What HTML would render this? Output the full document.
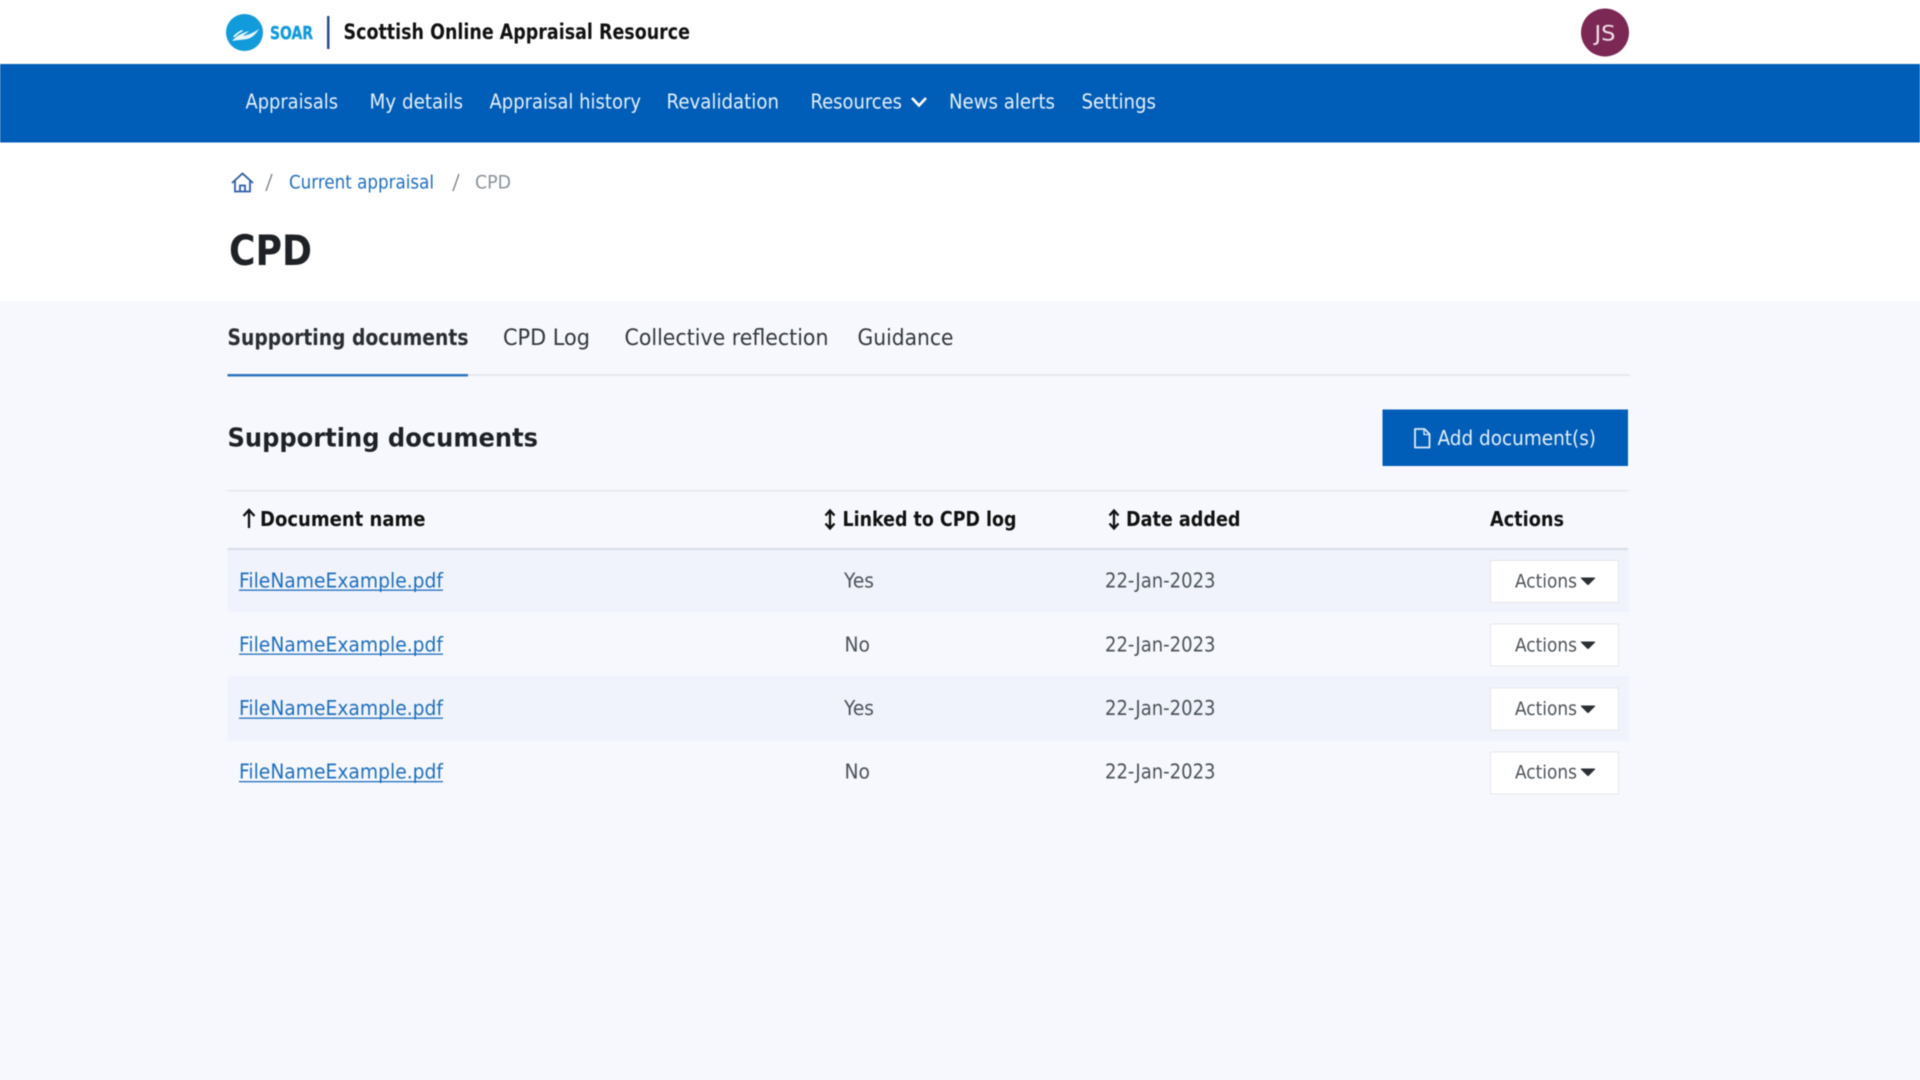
<!DOCTYPE html>
<html lang="en"><head><meta charset="utf-8"><title>CPD</title>
<style>
html,body{margin:0;padding:0;background:#f6f8fd;overflow:hidden}
svg{display:block;filter:blur(.55px)}
text{font-family:"DejaVu Sans","Liberation Sans",sans-serif;font-size:20px;fill:#212529}
.n{fill:#e6eff9;font-size:20px}
.b{font-weight:700}
.th{font-weight:700;font-size:20px;fill:#111}
.l{fill:#1f6fbf}
.g{fill:#4b5259}
.t{font-size:22px;fill:#33383d}
</style></head><body>
<svg width="1920" height="1080" viewBox="0 0 1920 1080" xmlns="http://www.w3.org/2000/svg">
<rect width="1920" height="1080" fill="#f6f8fd"/>
<rect width="1920" height="301" fill="#fff"/>
<rect y="64" width="1920" height="78.500" fill="#005eb8"/>

<circle cx="244.500" cy="32.500" r="18.500" fill="#129bdb"/>
<path d="M232 41c4-5 10-8 17-10-2 2-4 3-6 5 5-1 10-3 16-7-3 5-7 9-12 10-5 1-10 1-15 2z" fill="#e8f5fc"/>
<path d="M233 37c2-3 5-5 9-7l1 1c-4 2-6 4-8 6z" fill="#fff"/>
<text x="270" y="39" class="b" style="font-size:18px;fill:#129bdb;stroke:#129bdb;stroke-width:.4" textLength="43" lengthAdjust="spacingAndGlyphs">SOAR</text>
<rect x="327" y="16" width="2.500" height="33" fill="#2c4a8f"/>
<text x="343.500" y="39" style="font-size:21px;font-weight:700;fill:#111" textLength="346.500" lengthAdjust="spacingAndGlyphs">Scottish Online Appraisal Resource</text>
<circle cx="1605" cy="32.500" r="24" fill="#7c2855"/>
<text x="1594.500" y="40.500" style="font-size:21px;fill:#f1dfe8" textLength="21" lengthAdjust="spacingAndGlyphs">JS</text>

<text x="245.500" y="108.500" class="n" textLength="92.500" lengthAdjust="spacingAndGlyphs">Appraisals</text>
<text x="369.500" y="108.500" class="n" textLength="93.500" lengthAdjust="spacingAndGlyphs">My details</text>
<text x="489.500" y="108.500" class="n" textLength="151.500" lengthAdjust="spacingAndGlyphs">Appraisal history</text>
<text x="666.500" y="108.500" class="n" textLength="112.500" lengthAdjust="spacingAndGlyphs">Revalidation</text>
<text x="810.500" y="108.500" class="n" textLength="91.500" lengthAdjust="spacingAndGlyphs">Resources</text>
<path d="M912 98l7 7.500 7-7.500" fill="none" stroke="#fff" stroke-width="2.600"/>
<text x="949" y="108.500" class="n" textLength="106" lengthAdjust="spacingAndGlyphs">News alerts</text>
<text x="1081.500" y="108.500" class="n" textLength="74.500" lengthAdjust="spacingAndGlyphs">Settings</text>

<g fill="none" stroke="#2c5ea8" stroke-width="1.800">
<path d="M232 183l10.500-9.500 10.500 9.500"/>
<path d="M235 181v10.500h15V181"/>
<path d="M240 191.500v-6h5v6"/>
</g>
<path d="M272 174l-6 17" stroke="#767e86" stroke-width="1.300" fill="none"/>
<text x="289" y="188.500" class="l" style="font-size:19px" textLength="145" lengthAdjust="spacingAndGlyphs">Current appraisal</text>
<path d="M459 174l-6 17" stroke="#767e86" stroke-width="1.300" fill="none"/>
<text x="475" y="188.500" style="font-size:19px;fill:#8a929a" textLength="36" lengthAdjust="spacingAndGlyphs">CPD</text>

<text x="229" y="265" class="b" style="font-size:42px;fill:#1e2226" textLength="83" lengthAdjust="spacingAndGlyphs">CPD</text>

<text x="227.500" y="345" class="t b" style="fill:#2a2e33" textLength="241" lengthAdjust="spacingAndGlyphs">Supporting documents</text>
<text x="503" y="345" class="t" textLength="87" lengthAdjust="spacingAndGlyphs">CPD Log</text>
<text x="624.500" y="345" class="t" textLength="204" lengthAdjust="spacingAndGlyphs">Collective reflection</text>
<text x="857.500" y="345" class="t" textLength="96" lengthAdjust="spacingAndGlyphs">Guidance</text>
<rect x="228" y="374" width="1402" height="2" fill="#e6e8ee"/>
<rect x="227.500" y="374" width="240.500" height="2.500" fill="#2f74c0"/>

<text x="227.500" y="446.500" class="b" style="font-size:26px;fill:#1e2226" textLength="310.500" lengthAdjust="spacingAndGlyphs">Supporting documents</text>

<rect x="1382.500" y="409.500" width="245.500" height="56.500" fill="#005eb8"/>
<path d="M1415 429h9.500l5 5v13.500h-14.500z" fill="none" stroke="#dfeaf6" stroke-width="1.800" stroke-linejoin="round"/>
<path d="M1424 429v5.500h5.500" fill="none" stroke="#dfeaf6" stroke-width="1.300"/>
<text x="1437.500" y="445" style="font-size:20px;fill:#e6eff9" textLength="158.500" lengthAdjust="spacingAndGlyphs">Add document(s)</text>

<rect x="227.500" y="490" width="1400.500" height="1.500" fill="#e3e6ed"/>
<rect x="227.500" y="548" width="1400.500" height="2.500" fill="#d8dde6"/>

<rect x="227.500" y="550" width="1401.500" height="62" fill="#f0f3fb"/>
<rect x="227.500" y="676" width="1401.500" height="65" fill="#f0f3fb"/>

<g fill="none" stroke="#111" stroke-width="2.300">
<path d="M249 511v17M243.500 516l5.500-6 5.500 6"/>
<path d="M830 511v17M825.500 515.500l4.500-5 4.500 5M825.500 523.500l4.500 5 4.500-5"/>
<path d="M1114 511v17M1109.500 515.500l4.500-5 4.500 5M1109.500 523.500l4.500 5 4.500-5"/>
</g>
<text x="260" y="526" class="th" textLength="165.500" lengthAdjust="spacingAndGlyphs">Document name</text>
<text x="842.500" y="526" class="th" textLength="174" lengthAdjust="spacingAndGlyphs">Linked to CPD log</text>
<text x="1126" y="526" class="th" textLength="114.500" lengthAdjust="spacingAndGlyphs">Date added</text>
<text x="1490" y="526" class="th" textLength="74" lengthAdjust="spacingAndGlyphs">Actions</text>

<g>
<text x="239" y="587.500" class="l" textLength="204" lengthAdjust="spacingAndGlyphs">FileNameExample.pdf</text>
<rect x="239" y="589.500" width="204" height="1.300" fill="#1f6fbf"/>
<text x="844" y="587.500" class="g" textLength="30" lengthAdjust="spacingAndGlyphs">Yes</text>
<text x="1105" y="587.500" class="g" textLength="110.500" lengthAdjust="spacingAndGlyphs">22-Jan-2023</text>
<rect x="1490.500" y="560.500" width="128" height="42" fill="#fff" stroke="#e4e7ec"/>
<text x="1515" y="587.500" class="g" style="font-size:19px" textLength="62" lengthAdjust="spacingAndGlyphs">Actions</text>
<path d="M1581.500 577.500h13q1 0 .5 1l-6 6q-1 1-2 0l-6-6q-.5-1 .5-1z" fill="#2b3035"/>
</g>
<g>
<text x="239" y="651.500" class="l" textLength="204" lengthAdjust="spacingAndGlyphs">FileNameExample.pdf</text>
<rect x="239" y="653.500" width="204" height="1.300" fill="#1f6fbf"/>
<text x="844.500" y="651.500" class="g" textLength="25.500" lengthAdjust="spacingAndGlyphs">No</text>
<text x="1105" y="651.500" class="g" textLength="110.500" lengthAdjust="spacingAndGlyphs">22-Jan-2023</text>
<rect x="1490.500" y="624" width="128" height="42" fill="#fff" stroke="#e4e7ec"/>
<text x="1515" y="651.500" class="g" style="font-size:19px" textLength="62" lengthAdjust="spacingAndGlyphs">Actions</text>
<path d="M1581.500 641.500h13q1 0 .5 1l-6 6q-1 1-2 0l-6-6q-.5-1 .5-1z" fill="#2b3035"/>
</g>
<g>
<text x="239" y="715" class="l" textLength="204" lengthAdjust="spacingAndGlyphs">FileNameExample.pdf</text>
<rect x="239" y="717.500" width="204" height="1.300" fill="#1f6fbf"/>
<text x="844" y="715" class="g" textLength="30" lengthAdjust="spacingAndGlyphs">Yes</text>
<text x="1105" y="715" class="g" textLength="110.500" lengthAdjust="spacingAndGlyphs">22-Jan-2023</text>
<rect x="1490.500" y="688" width="128" height="42" fill="#fff" stroke="#e4e7ec"/>
<text x="1515" y="715" class="g" style="font-size:19px" textLength="62" lengthAdjust="spacingAndGlyphs">Actions</text>
<path d="M1581.500 705.500h13q1 0 .5 1l-6 6q-1 1-2 0l-6-6q-.5-1 .5-1z" fill="#2b3035"/>
</g>
<g>
<text x="239" y="778.500" class="l" textLength="204" lengthAdjust="spacingAndGlyphs">FileNameExample.pdf</text>
<rect x="239" y="781" width="204" height="1.300" fill="#1f6fbf"/>
<text x="844.500" y="778.500" class="g" textLength="25.500" lengthAdjust="spacingAndGlyphs">No</text>
<text x="1105" y="778.500" class="g" textLength="110.500" lengthAdjust="spacingAndGlyphs">22-Jan-2023</text>
<rect x="1490.500" y="752" width="128" height="42" fill="#fff" stroke="#e4e7ec"/>
<text x="1515" y="778.500" class="g" style="font-size:19px" textLength="62" lengthAdjust="spacingAndGlyphs">Actions</text>
<path d="M1581.500 768.500h13q1 0 .5 1l-6 6q-1 1-2 0l-6-6q-.5-1 .5-1z" fill="#2b3035"/>
</g>
</svg>
</body></html>
